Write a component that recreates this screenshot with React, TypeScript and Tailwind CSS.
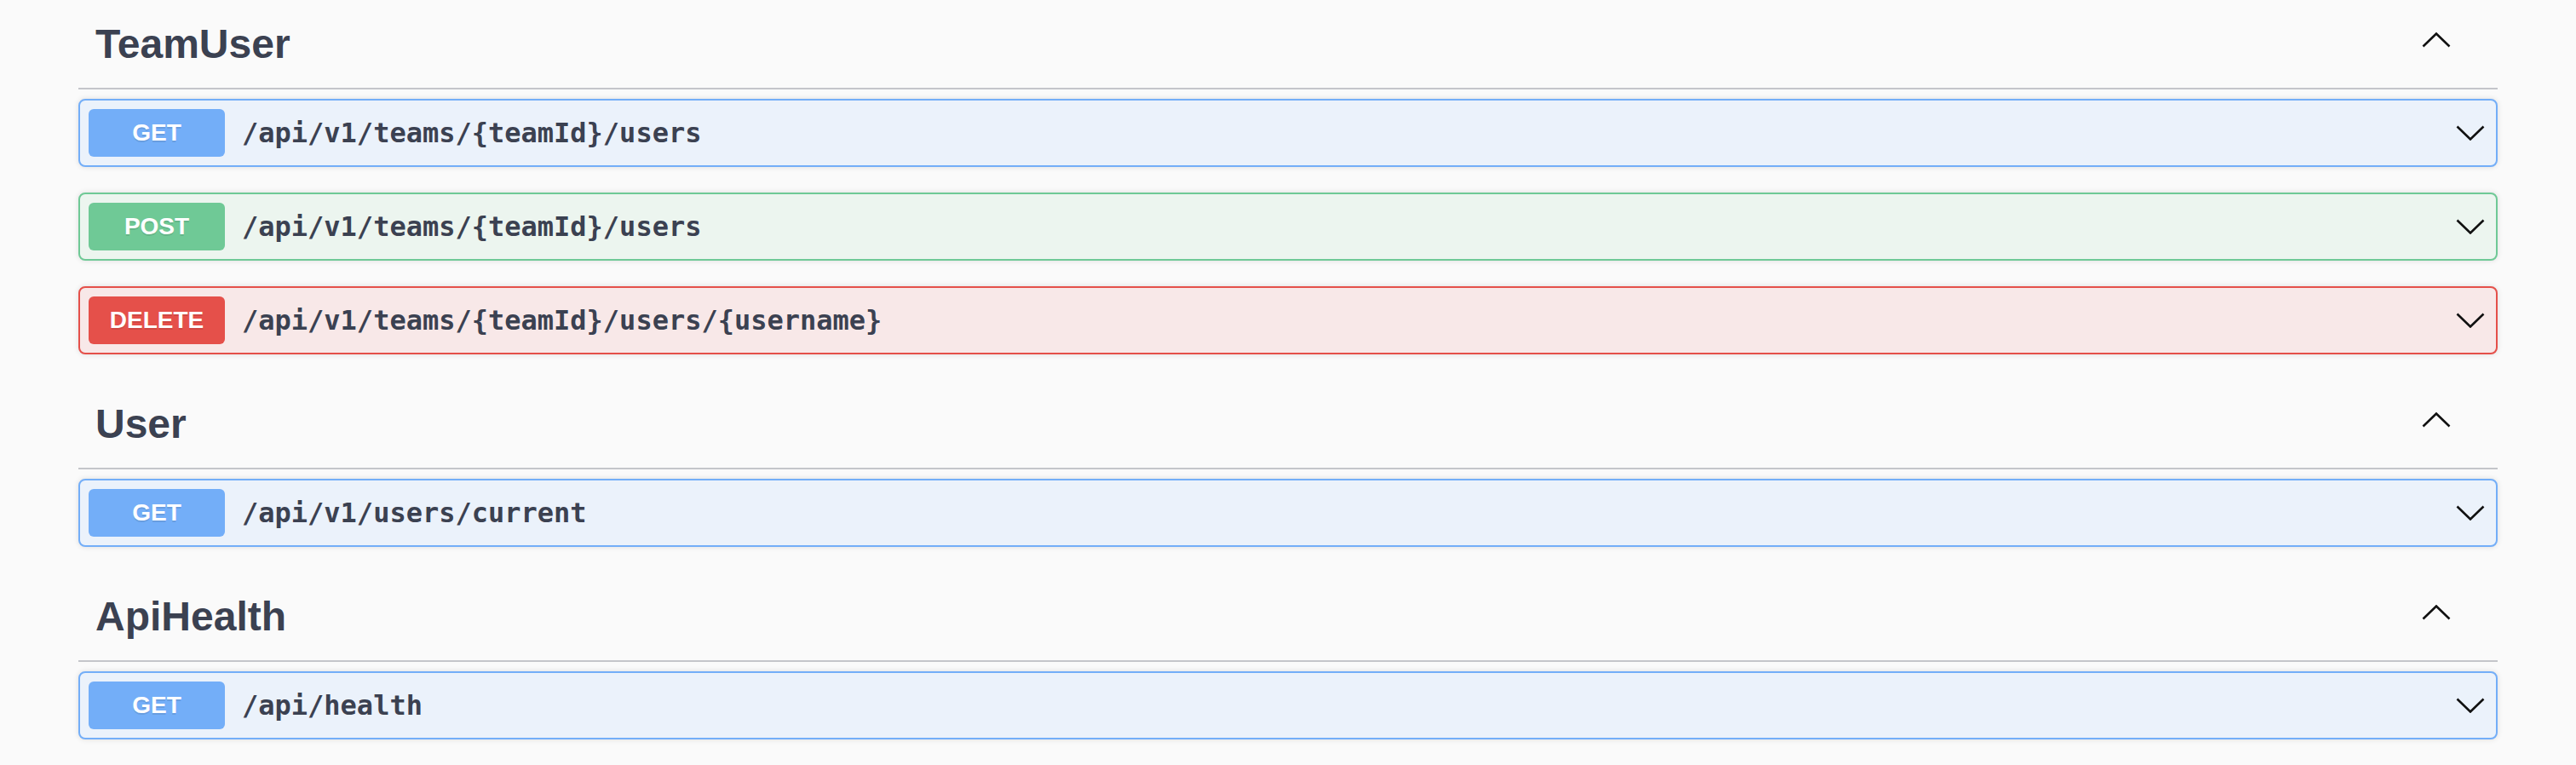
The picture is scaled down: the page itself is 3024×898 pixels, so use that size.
import { Fragment } from 'react';

type Method = 'GET' | 'POST' | 'DELETE';

interface Operation {
  method: Method;
  path: string;
}

interface TagSection {
  name: string;
  ops: Operation[];
}

const SECTIONS: TagSection[] = [
  {
    name: 'TeamUser',
    ops: [
      { method: 'GET', path: '/api/v1/teams/{teamId}/users' },
      { method: 'POST', path: '/api/v1/teams/{teamId}/users' },
      { method: 'DELETE', path: '/api/v1/teams/{teamId}/users/{username}' },
    ],
  },
  {
    name: 'User',
    ops: [{ method: 'GET', path: '/api/v1/users/current' }],
  },
  {
    name: 'ApiHealth',
    ops: [{ method: 'GET', path: '/api/health' }],
  },
];

const METHOD_STYLES: Record<Method, { box: string; badge: string }> = {
  GET: {
    box: 'bg-[#ebf2fb] border-[#73aef8]',
    badge: 'bg-[#73aef8]',
  },
  POST: {
    box: 'bg-[#ecf5ef] border-[#6fc996]',
    badge: 'bg-[#6fc996]',
  },
  DELETE: {
    box: 'bg-[#f8e8e8] border-[#e5504a]',
    badge: 'bg-[#e5504a]',
  },
};

function Chevron({ up }: { up?: boolean }) {
  return (
    <svg width="34" height="18" viewBox="0 0 34 18" fill="none" className="shrink-0">
      <polyline
        points={up ? '1.5,16.5 17,1.5 32.5,16.5' : '1.5,1.5 17,16.5 32.5,1.5'}
        stroke="#111111"
        strokeWidth="2.6"
      />
    </svg>
  );
}

function OperationRow({ op }: { op: Operation }) {
  const s = METHOD_STYLES[op.method];
  return (
    <div
      className={`mb-[30px] flex h-[80px] items-center rounded-[8px] border-2 p-[10px] shadow-[0_0_6px_rgba(0,0,0,0.12)] ${s.box}`}
    >
      <span
        className={`flex h-[56px] w-[160px] shrink-0 items-center justify-center rounded-[6px] text-[28px] font-bold text-white [text-shadow:0_2px_0_rgba(0,0,0,0.1)] ${s.badge}`}
        style={{ fontFamily: '"Liberation Sans", Arial, sans-serif' }}
      >
        {op.method}
      </span>
      <span
        className="flex-1 px-[20px] text-[32px] font-bold text-[#3b4151]"
        style={{ fontFamily: '"DejaVu Sans Mono", "Liberation Mono", monospace' }}
      >
        {op.path}
      </span>
      <span className="mr-[3px] flex items-center">
        <Chevron />
      </span>
    </div>
  );
}

export default function App() {
  return (
    <div
      className="min-h-[898px] w-full bg-[#fafafa] px-[92px]"
      style={{ fontFamily: '"Liberation Sans", Arial, sans-serif' }}
    >
      {SECTIONS.map((section) => (
        <Fragment key={section.name}>
          {/* Tag heading */}
          <div className="mb-[11px] flex h-[105px] items-center border-b-2 border-[#c4c5ca] pb-[20px] pl-[20px] pr-[55px] pt-[20px]">
            <h3 className="flex-1 text-[48px] font-bold leading-none text-[#3b4151]">{section.name}</h3>
            <span className="mb-[10px] flex items-center">
              <Chevron up />
            </span>
          </div>
          {section.ops.map((op) => (
            <OperationRow key={op.method + op.path} op={op} />
          ))}
        </Fragment>
      ))}
    </div>
  );
}
